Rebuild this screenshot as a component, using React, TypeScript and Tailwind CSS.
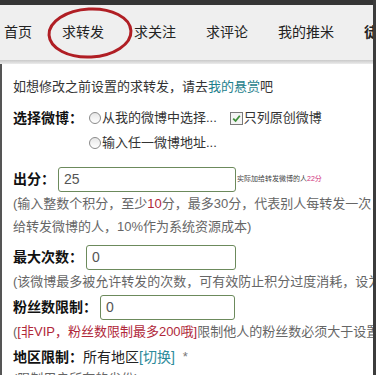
import React from 'react';

const navItems = ['首页', '求转发', '求关注', '求评论', '我的推米'];

function Radio() {
  return (
    <span className="inline-block w-[12px] h-[12px] rounded-full border border-[#8a8a8a] bg-gradient-to-b from-[#e6e6e6] to-white mr-[1px] shrink-0" />
  );
}

function Checkbox() {
  return (
    <span className="inline-flex items-center justify-center w-[13px] h-[13px] border border-[#7a7a7a] bg-[#f4f4f4] mr-[1px] shrink-0">
      <svg width="9" height="9" viewBox="0 0 9 9">
        <path d="M1.2 4.6 L3.6 7 L7.8 1.8" fill="none" stroke="#3f8f3a" strokeWidth="1.8" />
      </svg>
    </span>
  );
}

function Field({ label, value, width }: { label: string; value: string; width: string }) {
  return (
    <div className="flex items-center h-[25px]">
      <span className="text-[14px] font-bold text-[#111]">{label}</span>
      <div className={`ml-[3px] h-[25px] ${width} border border-[#6c8a5c] rounded-[3px] bg-white flex items-center pl-[5px] text-[14px] text-[#555]`}>
        {value}
      </div>
    </div>
  );
}

export default function App() {
  return (
    <div
      className="relative w-[376px] h-[375px] overflow-hidden bg-white flex flex-col border-r-[3px] border-[#3c3c3c]"
      style={{ fontFamily: '"Liberation Sans", "Noto Sans CJK SC", sans-serif' }}
    >
      <div className="h-[5px] bg-[#353535] shrink-0" />
      <nav className="h-[55px] bg-[#efefef] flex items-center gap-[30px] pl-[4px] whitespace-nowrap text-[14px] text-[#222] shrink-0">
        {navItems.map((item) => (
          <span key={item}>{item}</span>
        ))}
        <span className="font-bold">徒步</span>
      </nav>
      <div className="h-[4px] bg-gradient-to-b from-[#c9c9c9] to-[#ececec] shrink-0" />

      <div className="flex-1 border-l-2 border-[#555] pl-[11px] pt-[13px] whitespace-nowrap overflow-hidden text-[13px]">
        <div className="leading-[20px] text-[#333]">
          如想修改之前设置的求转发，请去<span className="text-[#1f7f8c]">我的悬赏</span>吧
        </div>

        <div className="mt-[11px] flex items-center h-[20px]">
          <span className="text-[14px] font-bold text-[#111] w-[76px]">选择微博：</span>
          <Radio />
          <span className="text-[#333]">从我的微博中选择...</span>
          <span className="ml-[13px] flex items-center">
            <Checkbox />
            <span className="text-[#333]">只列原创微博</span>
          </span>
        </div>
        <div className="mt-[5px] flex items-center h-[20px] pl-[76px]">
          <Radio />
          <span className="text-[#333]">输入任一微博地址...</span>
        </div>

        <div className="mt-[14px] flex items-center">
          <Field label="出分：" value="25" width="w-[178px]" />
          <span className="text-[7px] text-[#444] ml-[1px]">
            实际加给转发微博的人<span className="text-[#d0307a]">22分</span>
          </span>
        </div>
        <div className="leading-[23px] text-[#666]">
          (输入整数个积分，至少<span className="text-[#b0283a]">10</span>分，最多30分，代表别人每转发一次，
          <br />
          给转发微博的人，10%作为系统资源成本)
        </div>

        <div className="mt-[7px]">
          <Field label="最大次数：" value="0" width="w-[150px]" />
        </div>
        <div className="leading-[23px] text-[#666]">(该微博最多被允许转发的次数，可有效防止积分过度消耗，设为0则不限制)</div>

        <div className="mt-[2px]">
          <Field label="粉丝数限制：" value="0" width="w-[135px]" />
        </div>
        <div className="leading-[23px] text-[#666]">
          (<span className="text-[#b0283a]">[非VIP，粉丝数限制最多200哦]</span>限制他人的粉丝数必须大于设置值)
        </div>

        <div className="mt-[2px] leading-[24px] flex items-center">
          <span className="text-[14px] font-bold text-[#111]">地区限制：</span>
          <span className="text-[14px] text-[#222]">所有地区</span>
          <span className="text-[14px] text-[#2c8a9a]">[切换]</span>
          <span className="ml-[8px] text-[#777]">*</span>
        </div>
        <div className="leading-[20px] text-[#666]">(限制用户所在的省份)</div>
      </div>

      <svg className="absolute left-[45px] top-[5px]" width="90" height="56" viewBox="0 0 90 56">
        <ellipse cx="45" cy="28" rx="41" ry="24" fill="none" stroke="#b01e24" strokeWidth="3" transform="rotate(-3 45 28)" />
      </svg>
    </div>
  );
}
